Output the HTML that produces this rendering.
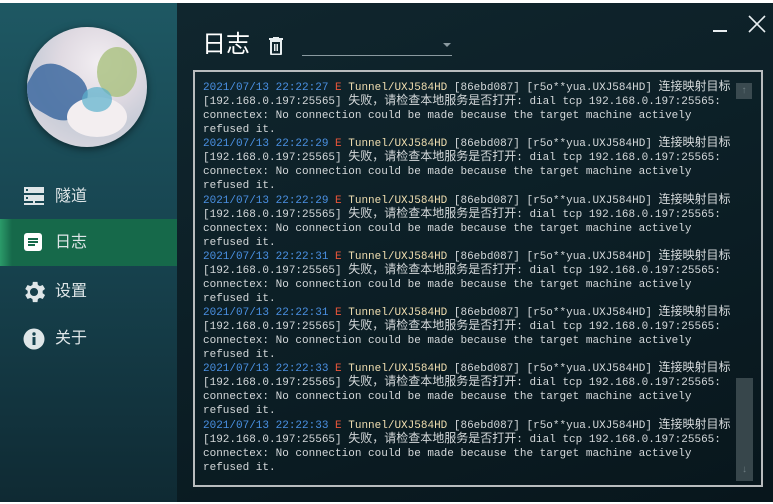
<!DOCTYPE html>
<html><head><meta charset="utf-8"><style>
*{margin:0;padding:0;box-sizing:border-box}
body{width:773px;height:504px;overflow:hidden;background:#fff;font-family:"Liberation Sans","Noto Sans CJK SC",sans-serif;position:relative}
#side{position:absolute;left:0;top:3px;width:177px;height:499px;background:linear-gradient(180deg,#1e5863 0%,#17434f 50%,#0f2a33 100%)}
#main{position:absolute;left:177px;top:3px;width:596px;height:499px;background:linear-gradient(160deg,#10262e 0%,#0b1d24 60%,#08161c 100%)}
.av{position:absolute;left:27px;top:24px;width:120px;height:120px;border-radius:50%;overflow:hidden;background:radial-gradient(circle at 60% 30%,#f2eef2 0%,#e0dae2 35%,#c9cdd8 60%,#e4dde3 100%);box-shadow:0 2px 8px rgba(0,0,0,.5)}
.item{position:absolute;left:0;width:177px;height:47px;color:#dfe6e8;font-size:16px;line-height:47px;padding-left:55px}
.item svg{position:absolute;left:23px;top:13px}
.act{background:linear-gradient(90deg,#2b9a69 0,#16694a 12px,#16694a 100%)}
pre{font-family:"Liberation Mono","Noto Sans CJK SC",monospace;font-size:11px;color:#d4d8da;white-space:pre}
pre div{height:14.07px;line-height:14.07px;overflow:visible}
.d{color:#4a90e2}.e{color:#e8553a}.t{color:#f0deb0}
.c{font-size:12px;font-family:"Noto Sans CJK SC",sans-serif;line-height:0}
</style></head><body>
<div id="side">
<div class="av">
<div style="position:absolute;left:0;top:40px;width:60px;height:50px;background:#3e6aa0;border-radius:40%;transform:rotate(30deg);opacity:.85"></div>
<div style="position:absolute;left:70px;top:20px;width:40px;height:50px;background:#a9c07e;border-radius:50%;opacity:.8"></div>
<div style="position:absolute;left:40px;top:70px;width:60px;height:40px;background:#f3eef0;border-radius:50%"></div>
<div style="position:absolute;left:55px;top:60px;width:30px;height:25px;background:#5ab0cc;border-radius:50%;opacity:.7"></div>
</div>
<div class="item" style="top:170px"><svg width="22" height="20" viewBox="0 0 22 20"><rect x="1" y="1" width="20" height="6" fill="#dfe6e8"/><rect x="1" y="9" width="20" height="6" fill="#dfe6e8"/><rect x="3" y="3" width="2" height="2" fill="#1b4d57"/><rect x="3" y="11" width="2" height="2" fill="#1b4d57"/><rect x="10" y="15" width="2" height="3" fill="#dfe6e8"/><rect x="1" y="17" width="20" height="2" fill="#dfe6e8"/></svg>隧道</div>
<div class="item act" style="top:216px"><svg width="20" height="20" viewBox="0 0 20 20"><rect x="1" y="1" width="18" height="18" rx="3" fill="#fff"/><rect x="5" y="6" width="10" height="2" fill="#16694a"/><rect x="5" y="9" width="10" height="2" fill="#16694a"/><rect x="5" y="12" width="7" height="2" fill="#16694a"/></svg>日志</div>
<div class="item" style="top:265px"><svg width="22" height="22" viewBox="2.5 2.5 19 19"><path fill="#dfe6e8" d="M12 15.5A3.5 3.5 0 1 1 12 8.5a3.5 3.5 0 0 1 0 7zm7.43-2.53a7.77 7.77 0 0 0 0-1.94l2.11-1.65-2-3.46-2.49 1a7.3 7.3 0 0 0-1.69-.98L15 3.3h-4l-.38 2.64a7.3 7.3 0 0 0-1.69.98l-2.49-1-2 3.46 2.11 1.65a7.77 7.77 0 0 0 0 1.94l-2.11 1.65 2 3.46 2.49-1c.52.4 1.08.73 1.69.98L11 20.7h4l.38-2.64a7.3 7.3 0 0 0 1.69-.98l2.49 1 2-3.46z"/></svg>设置</div>
<div class="item" style="top:312px"><svg width="22" height="22" viewBox="0 0 22 22"><circle cx="11" cy="11" r="10.5" fill="#dfe6e8"/><rect x="9.5" y="9" width="3" height="8" fill="#17434f"/><circle cx="11" cy="6" r="1.7" fill="#17434f"/></svg>关于</div>
</div>
<div id="main">
<div style="position:absolute;left:25px;top:27px;color:#fff;font-size:24px;line-height:30px">日志</div>
<svg style="position:absolute;left:91px;top:34px" width="16" height="18" viewBox="0 0 16 18"><rect x="1" y="1" width="14" height="2" fill="#e8eef0"/><rect x="5" y="0" width="6" height="2" fill="#e8eef0"/><path d="M3 4h10v12.5a1 1 0 0 1-1 1H4a1 1 0 0 1-1-1z" fill="none" stroke="#e8eef0" stroke-width="2"/><rect x="6" y="7" width="1.5" height="7" fill="#e8eef0"/><rect x="8.5" y="7" width="1.5" height="7" fill="#e8eef0"/></svg>
<div style="position:absolute;left:125px;top:52px;width:150px;height:1px;background:#8a9aa0"></div>
<div style="position:absolute;left:266px;top:40px;width:0;height:0;border-left:4px solid transparent;border-right:4px solid transparent;border-top:4px solid #8a9aa0"></div>
<div style="position:absolute;left:536px;top:27px;width:14px;height:1.5px;background:#e8eef0"></div>
<svg style="position:absolute;left:571px;top:12px" width="18" height="18" viewBox="0 0 18 18"><path d="M1 1L17 17M17 1L1 17" stroke="#e8eef0" stroke-width="1.6"/></svg>
<div style="position:absolute;left:16px;top:67px;width:570px;height:417px;border:2px solid #b8bcbe;overflow:hidden">
<pre style="position:absolute;left:8px;top:9px"><div><span class="d">2021/07/13 22:22:27</span> <span class="e">E</span> <span class="t">Tunnel/UXJ584HD</span> [86ebd087] [r5o**yua.UXJ584HD] <span class="c">连接映射目标</span></div><div>[192.168.0.197:25565] <span class="c">失败，请检查本地服务是否打开</span>: dial tcp 192.168.0.197:25565:</div><div>connectex: No connection could be made because the target machine actively</div><div>refused it.</div><div><span class="d">2021/07/13 22:22:29</span> <span class="e">E</span> <span class="t">Tunnel/UXJ584HD</span> [86ebd087] [r5o**yua.UXJ584HD] <span class="c">连接映射目标</span></div><div>[192.168.0.197:25565] <span class="c">失败，请检查本地服务是否打开</span>: dial tcp 192.168.0.197:25565:</div><div>connectex: No connection could be made because the target machine actively</div><div>refused it.</div><div><span class="d">2021/07/13 22:22:29</span> <span class="e">E</span> <span class="t">Tunnel/UXJ584HD</span> [86ebd087] [r5o**yua.UXJ584HD] <span class="c">连接映射目标</span></div><div>[192.168.0.197:25565] <span class="c">失败，请检查本地服务是否打开</span>: dial tcp 192.168.0.197:25565:</div><div>connectex: No connection could be made because the target machine actively</div><div>refused it.</div><div><span class="d">2021/07/13 22:22:31</span> <span class="e">E</span> <span class="t">Tunnel/UXJ584HD</span> [86ebd087] [r5o**yua.UXJ584HD] <span class="c">连接映射目标</span></div><div>[192.168.0.197:25565] <span class="c">失败，请检查本地服务是否打开</span>: dial tcp 192.168.0.197:25565:</div><div>connectex: No connection could be made because the target machine actively</div><div>refused it.</div><div><span class="d">2021/07/13 22:22:31</span> <span class="e">E</span> <span class="t">Tunnel/UXJ584HD</span> [86ebd087] [r5o**yua.UXJ584HD] <span class="c">连接映射目标</span></div><div>[192.168.0.197:25565] <span class="c">失败，请检查本地服务是否打开</span>: dial tcp 192.168.0.197:25565:</div><div>connectex: No connection could be made because the target machine actively</div><div>refused it.</div><div><span class="d">2021/07/13 22:22:33</span> <span class="e">E</span> <span class="t">Tunnel/UXJ584HD</span> [86ebd087] [r5o**yua.UXJ584HD] <span class="c">连接映射目标</span></div><div>[192.168.0.197:25565] <span class="c">失败，请检查本地服务是否打开</span>: dial tcp 192.168.0.197:25565:</div><div>connectex: No connection could be made because the target machine actively</div><div>refused it.</div><div><span class="d">2021/07/13 22:22:33</span> <span class="e">E</span> <span class="t">Tunnel/UXJ584HD</span> [86ebd087] [r5o**yua.UXJ584HD] <span class="c">连接映射目标</span></div><div>[192.168.0.197:25565] <span class="c">失败，请检查本地服务是否打开</span>: dial tcp 192.168.0.197:25565:</div><div>connectex: No connection could be made because the target machine actively</div><div>refused it.</div></pre>
<div style="position:absolute;left:541px;top:11px;width:16px;height:16px;background:#3a4a50;color:#6d7c80;font-size:10px;text-align:center;line-height:16px">↑</div>
<div style="position:absolute;left:541px;top:306px;width:17px;height:103px;background:#37464b;color:#6d7c80;font-size:10px;text-align:center;padding-top:86px">↓</div>
</div>
</div>
</body></html>
